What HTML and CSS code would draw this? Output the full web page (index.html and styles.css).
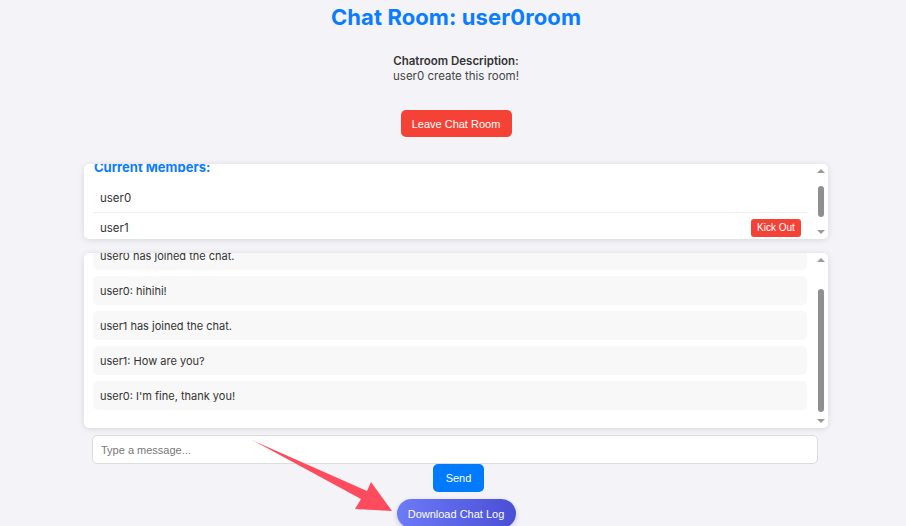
FILE: index.html
```html
<!DOCTYPE html>
<html lang="en">
<head>
<meta charset="utf-8">
<title>Chat Room</title>
<link rel="stylesheet" href="styles.css">
</head>
<body>
<div class="page">
  <h1 class="title">Chat Room: user0room</h1>
  <div class="desc">
    <div class="desc-label">Chatroom Description:</div>
    <div class="desc-text">user0 create this room!</div>
  </div>
  <button class="btn btn-leave">Leave Chat Room</button>

  <section class="panel members">
    <div class="panel-body">
      <div class="scroll-inner members-inner">
        <h3 class="members-title">Current Members:</h3>
        <ul class="member-list">
          <li class="member">user0</li>
          <li class="member">user1<button class="btn btn-kick">Kick Out</button></li>
        </ul>
      </div>
    </div>
    <div class="scrollbar">
      <span class="arrow up"></span>
      <div class="track"><div class="thumb thumb-members"></div></div>
      <span class="arrow down"></span>
    </div>
  </section>

  <section class="panel messages">
    <div class="panel-body">
      <div class="scroll-inner messages-inner">
        <div class="msg">user0 has joined the chat.</div>
        <div class="msg">user0: hihihi!</div>
        <div class="msg">user1 has joined the chat.</div>
        <div class="msg">user1: How are you?</div>
        <div class="msg">user0: I'm fine, thank you!</div>
      </div>
    </div>
    <div class="scrollbar">
      <span class="arrow up"></span>
      <div class="track"><div class="thumb thumb-messages"></div></div>
      <span class="arrow down"></span>
    </div>
  </section>

  <input class="msg-input" type="text" placeholder="Type a message...">
  <button class="btn btn-send">Send</button>
  <button class="btn btn-download">Download Chat Log</button>
</div>

<svg class="pointer" width="906" height="526" viewBox="0 0 906 526">
  <polygon points="252,440 367,491 371,482 392,511 355,509 361,499" fill="#ff4b5e"/>
</svg>
</body>
</html>
```

FILE: styles.css
```css
* { box-sizing: border-box; }

html, body {
  margin: 0;
  padding: 0;
  height: 100%;
  overflow: hidden;
}

body {
  background: #f3f3f8;
  font-family: "Inter", "Open Sans", sans-serif;
  color: #333;
}

.page {
  width: 744px;
  margin-left: 84px;
  display: flex;
  flex-direction: column;
  align-items: center;
}

.title {
  margin: 3px 0 0;
  font-size: 22px;
  line-height: 29px;
  font-weight: 700;
  color: #0a7cff;
  letter-spacing: 0.1px;
}

.desc {
  margin-top: 22px;
  text-align: center;
  font-size: 11.5px;
  line-height: 15px;
  color: #444;
}

.desc-label {
  font-weight: 600;
  color: #333;
}

.btn {
  border: none;
  font-family: "Liberation Sans", Arial, sans-serif;
  color: #fff;
  cursor: pointer;
}

.btn-leave {
  margin-top: 26px;
  width: 111px;
  height: 27px;
  background: #f44336;
  border-radius: 5px;
  font-size: 11px;
}

.panel {
  width: 744px;
  background: #fff;
  border-radius: 5px;
  box-shadow: 0 1px 6px rgba(0, 0, 0, 0.12);
  display: flex;
  overflow: hidden;
}

.members {
  margin-top: 27px;
  height: 75px;
}

.messages {
  margin-top: 14px;
  height: 175px;
}

.panel-body {
  flex: 1;
  overflow: hidden;
  padding: 0 6px 0 9px;
}

.scroll-inner {
  width: 100%;
}

.members-inner {
  margin-top: -5px;
}

.members-title {
  margin: 0 0 0 1px;
  font-size: 13px;
  line-height: 16px;
  font-weight: 700;
  color: #0a7cff;
}

.member-list {
  list-style: none;
  margin: 8px 0 0;
  padding: 0;
}

.member {
  height: 30px;
  padding: 0 7px;
  display: flex;
  align-items: center;
  justify-content: space-between;
  font-size: 11.5px;
  color: #333;
  border-bottom: 1px solid #f0f0f0;
}

.btn-kick {
  width: 50px;
  height: 18px;
  background: #f44336;
  border-radius: 3px;
  font-size: 10px;
  padding: 0;
  margin-right: -1px;
}

.messages-inner {
  margin-top: -12px;
  display: flex;
  flex-direction: column;
  gap: 6px;
}

.msg {
  height: 29px;
  padding: 0 7px;
  display: flex;
  align-items: center;
  background: #f8f8f8;
  border-radius: 5px;
  font-size: 11px;
  color: #333;
}

.scrollbar {
  width: 15px;
  flex: none;
  display: flex;
  flex-direction: column;
  align-items: center;
  background: #fff;
}

.arrow {
  width: 0;
  height: 0;
  border-left: 4px solid transparent;
  border-right: 4px solid transparent;
  flex: none;
}

.arrow.up {
  margin-top: 5px;
  border-bottom: 4px solid #9a9a9a;
}

.arrow.down {
  margin-bottom: 5px;
  border-top: 4px solid #9a9a9a;
}

.track {
  flex: 1;
  width: 100%;
  display: flex;
  flex-direction: column;
  align-items: center;
}

.thumb {
  width: 6px;
  background: #8f8f8f;
  border-radius: 3px;
}

.thumb-members {
  margin-top: 13px;
  height: 31px;
}

.thumb-messages {
  margin-top: 27px;
  height: 123px;
}

.msg-input {
  margin: 7px 10px 0 8px;
  align-self: stretch;
  height: 29px;
  border: 1px solid #dcdcdc;
  border-radius: 5px;
  background: #fff;
  padding: 0 8px;
  font-family: "Liberation Sans", Arial, sans-serif;
  font-size: 11px;
  color: #333;
  outline: none;
}

.msg-input::placeholder {
  color: #777;
}

.btn-send {
  margin-left: 5px;
  width: 51px;
  height: 28px;
  background: #007bff;
  border-radius: 5px;
  font-size: 11px;
}

.btn-download {
  margin-top: 7px;
  width: 119px;
  height: 29px;
  border-radius: 15px;
  background: linear-gradient(90deg, #6c7bf7, #4a4fd6);
  font-size: 11px;
  box-shadow: 0 2px 5px rgba(80, 80, 200, 0.25);
}

.pointer {
  position: absolute;
  left: 0;
  top: 0;
  pointer-events: none;
}
```
